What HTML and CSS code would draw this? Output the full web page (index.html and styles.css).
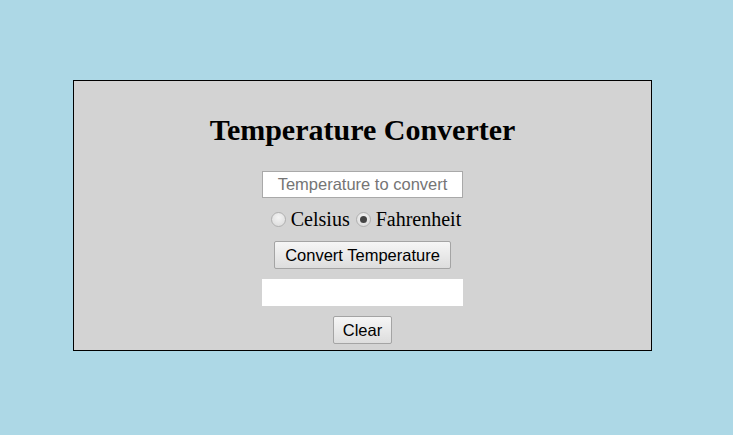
FILE: index.html
```html
<!DOCTYPE html>
<html>
<head>
<meta charset="utf-8">
<title>Temperature Converter</title>
<link rel="stylesheet" href="styles.css">
</head>
<body>
<div class="converter">
  <h1 class="title">Temperature Converter</h1>
  <input class="temp-input" type="text" placeholder="Temperature to convert">
  <div class="units">
    <label class="unit"><input class="radio" type="radio" name="unit" value="c">Celsius</label>
    <label class="unit"><input class="radio" type="radio" name="unit" value="f" checked>Fahrenheit</label>
  </div>
  <button class="btn btn-convert" type="button">Convert Temperature</button>
  <div class="result"></div>
  <button class="btn btn-clear" type="button">Clear</button>
</div>
</body>
</html>
```
FILE: styles.css
```css
html, body {
  margin: 0;
  padding: 0;
  background: #add8e6;
}
body {
  padding-top: 80px;
  font-family: "Liberation Serif", "Times New Roman", serif;
}
.converter {
  box-sizing: border-box;
  width: 579px;
  height: 271px;
  margin-left: 73px;
  background: #d3d3d3;
  border: 1px solid #000;
  display: flex;
  flex-direction: column;
  align-items: center;
}
.title {
  margin: 32px 0 0 0;
  font-size: 30px;
  line-height: 34px;
  font-weight: bold;
  color: #000;
}
.temp-input {
  box-sizing: border-box;
  margin-top: 24px;
  width: 201px;
  height: 27px;
  border: 1px solid #a9a9a9;
  background: #fff;
  padding: 0 4px;
  font-family: "Liberation Sans", Arial, sans-serif;
  font-size: 16.5px;
  text-align: center;
  outline: none;
}
.temp-input::placeholder {
  color: #757575;
}
.units {
  margin-top: 9px;
  padding-left: 7px;
  display: flex;
  align-items: center;
  gap: 6px;
  font-size: 20px;
  line-height: 25px;
  color: #000;
}
.unit {
  display: flex;
  align-items: center;
}
.radio {
  -webkit-appearance: none;
  appearance: none;
  box-sizing: border-box;
  margin: 0 5px 0 0;
  width: 15px;
  height: 15px;
  border-radius: 50%;
  border: 1px solid #b0b0b0;
  background: radial-gradient(circle at 50% 35%, #f4f4f4 0%, #d8d8d8 100%);
  position: relative;
}
.radio:checked::after {
  content: "";
  position: absolute;
  left: 3px;
  top: 3px;
  width: 7px;
  height: 7px;
  border-radius: 50%;
  background: #444;
}
.btn {
  box-sizing: border-box;
  margin-top: 9px;
  height: 28px;
  font-family: "Liberation Sans", Arial, sans-serif;
  font-size: 16.5px;
  color: #000;
  background: linear-gradient(#f6f6f6, #dddddd);
  border: 1px solid #a4a4a4;
  border-radius: 2px;
}
.btn-convert {
  width: 177px;
  padding: 0;
}
.btn-clear {
  width: 59px;
  padding: 0;
  margin-top: 10px;
}
.result {
  margin-top: 10px;
  width: 201px;
  height: 27px;
  background: #fff;
}
```
